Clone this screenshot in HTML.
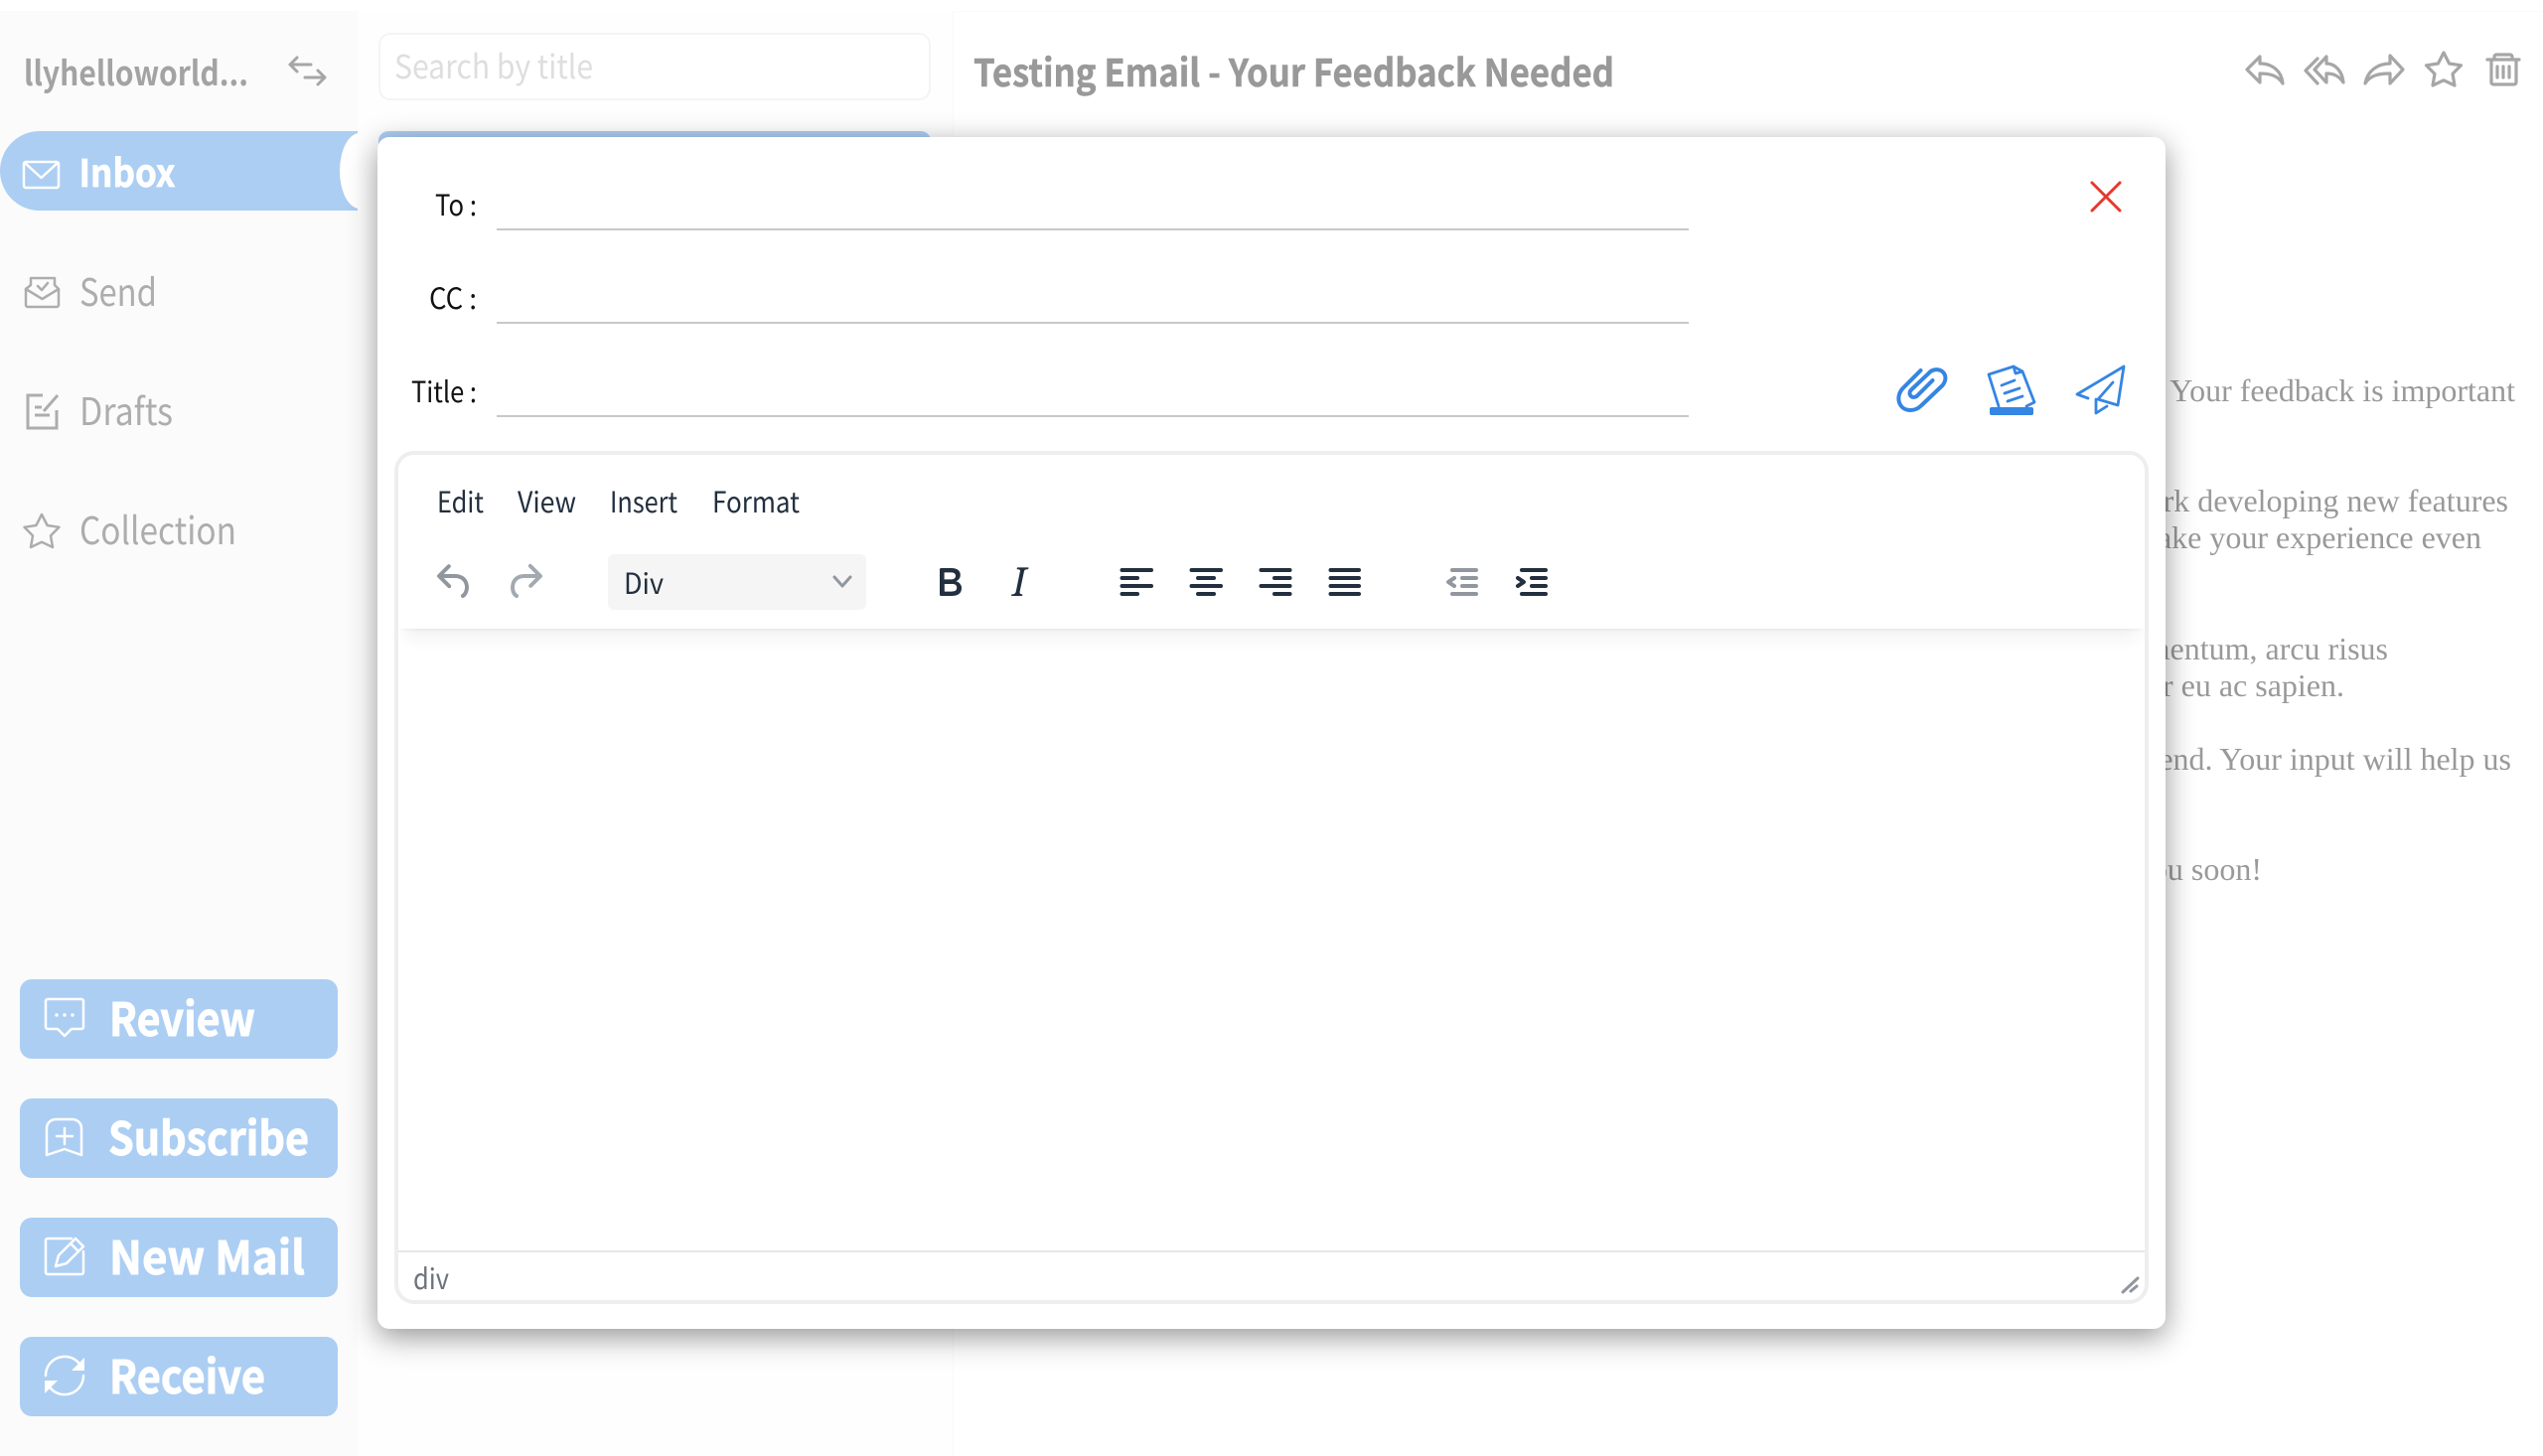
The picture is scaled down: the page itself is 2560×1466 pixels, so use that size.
<!DOCTYPE html>
<html lang="en">
<head>
<meta charset="utf-8">
<title>Mail</title>
<style>
html,body{margin:0;padding:0;background:#fff;width:2560px;height:1466px;overflow:hidden}
.a{position:absolute;box-sizing:border-box}
svg{position:absolute;left:0;top:0}
.ui{font-family:"Noto Sans CJK SC","Liberation Sans",sans-serif}
.serif{font-family:"Liberation Serif",serif;font-size:32px;fill:#999}
</style>
</head>
<body>
<div class="a" style="left:0;top:11px;width:360px;height:1455px;background:#fbfbfb"></div>
<div class="a" style="left:360px;top:11px;width:600px;height:1455px;background:#fefefe;border-right:1px solid #f9f9f9"></div>
<div class="a" style="left:961px;top:11px;width:1599px;height:1px;background:#fbfbfb"></div>
<div class="a" style="left:0;top:132px;width:360px;height:80px;background:#acceF3;border-radius:40px 0 0 40px"></div>
<div class="a" style="left:342px;top:134px;width:18px;height:76px;overflow:hidden"><div style="width:60px;height:76px;background:#fff;border-radius:20px/38px"></div></div>
<div class="a" style="left:381px;top:33px;width:556px;height:68px;background:#fff;border:2px solid #f4f4f4;border-radius:12px"></div>
<div class="a" style="left:381px;top:132px;width:556px;height:40px;background:#acceF3;border-radius:10px 10px 0 0"></div>
<div class="a" style="left:20px;top:986px;width:320px;height:80px;background:#acceF3;border-radius:12px"></div>
<div class="a" style="left:20px;top:1106px;width:320px;height:80px;background:#acceF3;border-radius:12px"></div>
<div class="a" style="left:20px;top:1226px;width:320px;height:80px;background:#acceF3;border-radius:12px"></div>
<div class="a" style="left:20px;top:1346px;width:320px;height:80px;background:#acceF3;border-radius:12px"></div>

<svg width="2560" height="1466" viewBox="0 0 2560 1466" xmlns="http://www.w3.org/2000/svg">
<g class="ui">
<text x="24" y="86" font-size="34" font-weight="700" fill="#a3a3a3" textLength="226" lengthAdjust="spacingAndGlyphs">llyhelloworld...</text>
<text x="397" y="79" font-size="33" fill="#dedede" textLength="200" lengthAdjust="spacingAndGlyphs">Search by title</text>
<text x="980" y="87" font-size="38" font-weight="700" fill="#999" stroke="#999" stroke-width=".5" textLength="645" lengthAdjust="spacingAndGlyphs">Testing Email - Your Feedback Needed</text>
<text x="79.5" y="188" font-size="38" font-weight="700" fill="#fff" stroke="#fff" stroke-width=".7" textLength="97" lengthAdjust="spacingAndGlyphs">Inbox</text>
<text x="80" y="308" font-size="38" fill="#adadad" textLength="78" lengthAdjust="spacingAndGlyphs">Send</text>
<text x="80" y="428" font-size="38" fill="#adadad" textLength="94" lengthAdjust="spacingAndGlyphs">Drafts</text>
<text x="80" y="548" font-size="38" fill="#adadad" textLength="158" lengthAdjust="spacingAndGlyphs">Collection</text>
<text x="110" y="1043" font-size="46" font-weight="700" fill="#fff" stroke="#fff" stroke-width=".9" textLength="147" lengthAdjust="spacingAndGlyphs">Review</text>
<text x="109" y="1163" font-size="46" font-weight="700" fill="#fff" stroke="#fff" stroke-width=".9" textLength="202" lengthAdjust="spacingAndGlyphs">Subscribe</text>
<text x="110" y="1283" font-size="46" font-weight="700" fill="#fff" stroke="#fff" stroke-width=".9" textLength="197" lengthAdjust="spacingAndGlyphs">New Mail</text>
<text x="110" y="1403" font-size="46" font-weight="700" fill="#fff" stroke="#fff" stroke-width=".9" textLength="157" lengthAdjust="spacingAndGlyphs">Receive</text>
</g>
<g class="serif" text-anchor="end">
<text x="2532" y="404">Your feedback is important</text>
<text x="2525" y="515">hard at work developing new features</text>
<text x="2498" y="552">to make your experience even</text>
<text x="2404" y="664">dolor fermentum, arcu risus</text>
<text x="2360" y="701">tempor eu ac sapien.</text>
<text x="2528" y="775">your end. Your input will help us</text>
<text x="2277" y="886">hear from you soon!</text>
</g>
<!-- sidebar icons -->
<g fill="none" stroke="#fff" stroke-width="2.5" stroke-linejoin="round" stroke-linecap="round">
<rect x="24" y="163" width="35" height="26" rx="2"/>
<path d="M25 164 L41.5 179 L58 164"/>
</g>
<g fill="none" stroke="#adadad" stroke-width="2.5" stroke-linejoin="round" stroke-linecap="round">
<path d="M26 291 L31 287 V280 H55 V287 L59 291 V307 a2 2 0 0 1 -2 2 H28 a2 2 0 0 1 -2-2 Z"/>
<path d="M26 291 L42.5 301 L59 291"/>
<path d="M38 288 l4 4 l6 -7"/>
</g>
<g fill="none" stroke="#adadad" stroke-width="3" stroke-linejoin="miter" stroke-linecap="butt">
<path d="M43 398 H28 V431 H57 V413"/>
<path d="M44 414 L58 398"/>
<path d="M35 410 h7"/>
<path d="M35 418 h15"/>
</g>
<path d="M42 518 L47.6 529 L59.5 530.8 L51 539.4 L53 551 L42 545.8 L31 551 L33 539.4 L24.5 530.8 L36.4 529Z" fill="none" stroke="#adadad" stroke-width="2.5" stroke-linejoin="round"/>
<g fill="none" stroke="#a6a6a6" stroke-width="3" stroke-linecap="round" stroke-linejoin="round">
<path d="M313 65 H292 M299 58 L292 65 L299 72"/>
<path d="M307 78 H327 M320 71 L327 78 L320 85"/>
</g>
<!-- button icons -->
<g fill="none" stroke="#fff" stroke-width="2.5" stroke-linejoin="round" stroke-linecap="round">
<path d="M48 1006 H82 a2 2 0 0 1 2 2 V1034 a2 2 0 0 1-2 2 H72 L65 1043 L58 1036 H48 a2 2 0 0 1-2-2 V1008 a2 2 0 0 1 2-2Z"/>
<path d="M47 1136 a9 9 0 0 1 9-9 H73 a9 9 0 0 1 9 9 V1163 L65 1157 L47 1163 Z"/>
<path d="M57 1144 H73 M65 1136 V1152"/>
<path d="M72 1247 H48 a2 2 0 0 0-2 2 V1281 a2 2 0 0 0 2 2 H82 a2 2 0 0 0 2-2 V1260"/>
<path d="M56 1275 L59 1264 L76 1247 L84 1255 L67 1272 Z"/>
<path d="M71 1252 L79 1260"/>
<path d="M46 1385 A19 19 0 0 1 79 1372"/>
<path d="M84 1385 A19 19 0 0 1 51 1398"/>
</g>
<g fill="#fff">
<circle cx="57" cy="1022" r="1.7"/><circle cx="65" cy="1022" r="1.7"/><circle cx="73" cy="1022" r="1.7"/>
<path d="M85 1367 V1380 H72Z"/>
<path d="M45 1403 V1390 H58Z"/>
</g>
<!-- top-right icons -->
<g fill="none" stroke="#a6a6a6" stroke-width="3.2" stroke-linejoin="round" stroke-linecap="round">
<path d="M2262 70 L2275 57 V64 C2288 64 2297 72 2298 84 C2293 76 2285 74 2275 74 V83 Z"/>
<path d="M2330 70 L2342 57 V64 C2351 64 2358 72 2359 83 C2354 76 2349 74 2342 74 V83Z"/>
<path d="M2333 59 L2321 71 L2333 84"/>
<path d="M2419 70 L2406 56 V64 C2393 64 2383 72 2381 84 C2386 76 2394 74 2406 74 V84Z"/>
<path transform="translate(2418 -465)" d="M42 518 L47.6 529 L59.5 530.8 L51 539.4 L53 551 L42 545.8 L31 551 L33 539.4 L24.5 530.8 L36.4 529Z"/>
<path d="M2504 60 H2536 M2511 60 V57 a2 2 0 0 1 2-2 H2527 a2 2 0 0 1 2 2 V60"/>
<path d="M2508 60 V83 a2 2 0 0 0 2 2 H2531 a2 2 0 0 0 2-2 V60"/>
<path d="M2514 67 V78 M2520 67 V78 M2526 67 V78"/>
</g>
</svg>

<!-- modal -->
<div class="a" style="left:380px;top:138px;width:1800px;height:1200px;background:#fff;border-radius:12px;box-shadow:0 8px 30px rgba(0,0,0,.42)"></div>
<div class="a" style="left:500px;top:230px;width:1200px;height:2px;background:#c8c8c8"></div>
<div class="a" style="left:500px;top:324px;width:1200px;height:2px;background:#c8c8c8"></div>
<div class="a" style="left:500px;top:418px;width:1200px;height:2px;background:#c8c8c8"></div>
<!-- editor -->
<div class="a" style="left:397px;top:454px;width:1766px;height:859px;background:#fff;border:4px solid #eee;border-radius:20px;overflow:hidden">
  <div class="a" style="left:0;top:0;width:1758px;height:175px;background:#fff;box-shadow:0 4px 4px -4px rgba(34,47,62,.1),0 16px 16px -8px rgba(34,47,62,.07)"></div>
  <div class="a" style="left:0;top:801px;width:1758px;height:2px;background:#e6e6e6"></div>
</div>
<div class="a" style="left:612px;top:558px;width:260px;height:56px;background:#f5f5f5;border-radius:6px"></div>

<svg width="2560" height="1466" viewBox="0 0 2560 1466" xmlns="http://www.w3.org/2000/svg">
<g class="ui">
<text x="438" y="217" font-size="29" fill="#111" textLength="42" lengthAdjust="spacingAndGlyphs">To :</text>
<text x="432" y="311" font-size="29" fill="#111" textLength="48" lengthAdjust="spacingAndGlyphs">CC :</text>
<text x="414" y="405" font-size="29" fill="#111" textLength="66" lengthAdjust="spacingAndGlyphs">Title :</text>
<text x="440" y="516" font-size="29" fill="#222f3e" textLength="47" lengthAdjust="spacingAndGlyphs">Edit</text>
<text x="521" y="516" font-size="29" fill="#222f3e" textLength="59" lengthAdjust="spacingAndGlyphs">View</text>
<text x="614" y="516" font-size="29" fill="#222f3e" textLength="68" lengthAdjust="spacingAndGlyphs">Insert</text>
<text x="717" y="516" font-size="29" fill="#222f3e" textLength="88" lengthAdjust="spacingAndGlyphs">Format</text>
<text x="628" y="598" font-size="29" fill="#222f3e" textLength="40" lengthAdjust="spacingAndGlyphs">Div</text>
<text x="416" y="1298" font-size="29" fill="#6c737b" textLength="36" lengthAdjust="spacingAndGlyphs">div</text>
</g>
<path d="M2106 184 L2134 212 M2134 184 L2106 212" fill="none" stroke="#e5392d" stroke-width="3" stroke-linecap="round"/>
<g fill="none" stroke="#3585e3" stroke-linejoin="round" stroke-linecap="round">
<path transform="translate(1.5 0)" stroke-width="4" d="M1932 373 L1914 391 C1906 400 1910 413 1922 413 C1926 413 1930 411 1933 408 L1954 388 C1962 378 1952 368 1942 374 L1922 393 C1919 397 1923 402 1928 399 L1944 383"/>
<g stroke-width="2.8">
<path d="M2012 409 L2002 377 L2027 369 L2036 374 L2048 405 L2040 409"/>
<path d="M2027 369 L2029 376 L2036 374"/>
<path d="M2015 388 L2028 383 M2018 396 L2033 391 M2021 404 L2036 399"/>
<path d="M2102 401 L2091 397 L2138 369 L2132 408 L2112 402 L2127 385"/>
<path d="M2110 402 V416 L2121 409"/>
</g>
</g>
<rect x="2003" y="410" width="44" height="8" rx="2" fill="#3585e3"/>
<!-- tiny icons -->
<g transform="translate(434 562) scale(2)" fill="#90979e"><path d="M6.4 8H12c3.7 0 6.2 2 6.8 5.1.6 2.7-.4 5.6-2.3 6.8a1 1 0 0 1-1-1.8c1.1-.7 1.8-2.7 1.4-4.6-.5-2.1-2.1-3.5-4.9-3.5H6.4l3.3 3.3a1 1 0 1 1-1.4 1.4l-5-5a1 1 0 0 1 0-1.4l5-5a1 1 0 0 1 1.4 1.4L6.4 8z"/></g>
<g transform="translate(504 562) scale(2)" fill="#a3a9b0"><path d="M17.6 10H12c-2.8 0-4.4 1.4-4.9 3.5-.4 2 .3 3.9 1.4 4.6a1 1 0 1 1-1 1.8c-2-1.2-2.9-4.1-2.3-6.8.6-3 3-5.1 6.8-5.1h5.6l-3.3-3.3a1 1 0 1 1 1.4-1.4l5 5a1 1 0 0 1 0 1.4l-5 5a1 1 0 0 1-1.4-1.4l3.3-3.3z"/></g>
<path d="M840 581 L848 590 L856 581" fill="none" stroke="#90979e" stroke-width="3" stroke-linecap="round" stroke-linejoin="round"/>
<g transform="translate(932 562) scale(2)" fill="#222f3e"><path d="M7.8 19c-.3 0-.5 0-.6-.2l-.2-.5V5.7c0-.2 0-.4.2-.5l.6-.2h5c1.5 0 2.7.3 3.5 1 .7.6 1.1 1.4 1.1 2.5a3 3 0 0 1-.6 1.9c-.4.6-1 1-1.6 1.2.4.1.9.3 1.3.6s.8.7 1 1.2c.4.4.5 1 .5 1.6 0 1.3-.4 2.3-1.3 3-.8.7-2.1 1-3.8 1H7.8zm5-8.3c.6 0 1.2-.1 1.6-.5.4-.3.6-.7.6-1.3 0-1.1-.8-1.7-2.3-1.7H9.3v3.5h3.4zm.5 6c.7 0 1.3-.1 1.7-.4.4-.4.6-.9.6-1.5s-.2-1-.7-1.4c-.4-.3-1-.4-2-.4H9.4v3.8h4z"/></g>
<g transform="translate(1002 562) scale(2)" fill="#222f3e"><path d="M16.7 4.7l-.1.9h-.3c-.6 0-1 0-1.4.3-.3.3-.4.6-.5 1.1l-2.1 9.8v.6c0 .5.4.8 1.2.8h.2l-.2.8H8l.2-.8h.2c1.1 0 1.8-.5 2-1.5l2-9.8.1-.5c0-.6-.4-.8-1.4-.8h-.3l.2-.9h5.8z"/></g>
<g fill="none" stroke="#222f3e" stroke-width="4" stroke-linecap="round">
<path d="M1129.5 574 H1159 M1129.5 582 H1145 M1129.5 590 H1159 M1129.5 598 H1145"/>
<path d="M1199.5 574 H1229 M1206 582 H1222 M1199.5 590 H1229 M1206 598 H1222"/>
<path d="M1269.5 574 H1298.5 M1283 582 H1298.5 M1269.5 590 H1298.5 M1283 598 H1298.5"/>
<path d="M1339.5 574 H1368 M1339.5 582 H1368 M1339.5 590 H1368 M1339.5 598 H1368"/>
</g>
<g transform="translate(1448 562) scale(2)" fill="#90979e"><path d="M7 5h12c.6 0 1 .4 1 1s-.4 1-1 1H7a1 1 0 1 1 0-2zm5 4h7c.6 0 1 .4 1 1s-.4 1-1 1h-7a1 1 0 0 1 0-2zm0 4h7c.6 0 1 .4 1 1s-.4 1-1 1h-7a1 1 0 0 1 0-2zm-5 4h12a1 1 0 0 1 0 2H7a1 1 0 0 1 0-2zm1.6-3.8a1 1 0 0 1-1.2 1.6l-3-2a1 1 0 0 1 0-1.6l3-2a1 1 0 0 1 1.2 1.6L6.8 12l1.8 1.2z"/></g>
<g transform="translate(1518 562) scale(2)" fill="#222f3e"><path d="M7 5h12c.6 0 1 .4 1 1s-.4 1-1 1H7a1 1 0 1 1 0-2zm5 4h7c.6 0 1 .4 1 1s-.4 1-1 1h-7a1 1 0 0 1 0-2zm0 4h7c.6 0 1 .4 1 1s-.4 1-1 1h-7a1 1 0 0 1 0-2zm-5 4h12a1 1 0 0 1 0 2H7a1 1 0 0 1 0-2zm-2.6-3.8L6.2 12l-1.8-1.2a1 1 0 0 1 1.2-1.6l3 2a1 1 0 0 1 0 1.6l-3 2a1 1 0 1 1-1.2-1.6z"/></g>
<path d="M2137 1301 L2152 1287 M2145 1300 L2151 1295" fill="none" stroke="#90979e" stroke-width="3" stroke-linecap="round"/>
</svg>
</body>
</html>
